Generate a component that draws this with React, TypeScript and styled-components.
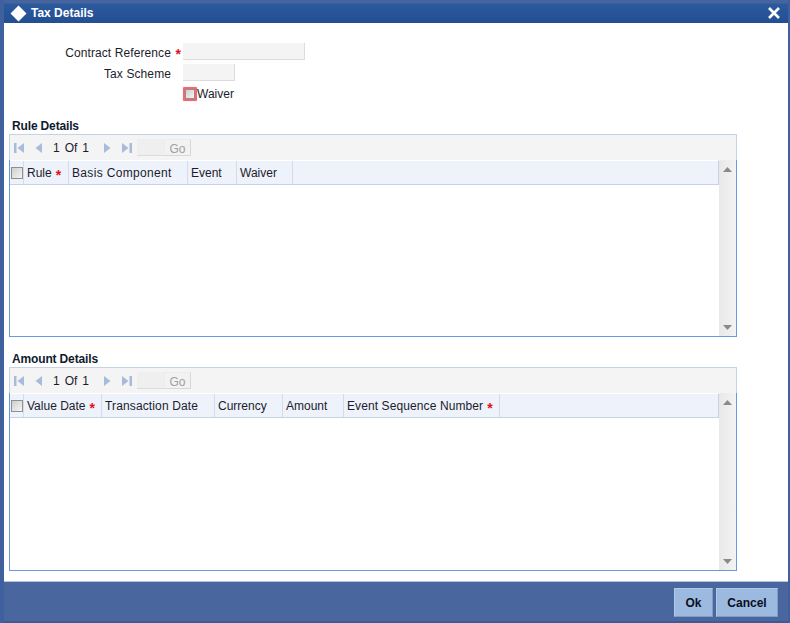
import React from 'react';
import styled, { createGlobalStyle } from 'styled-components';

const GlobalStyle = createGlobalStyle`
  html, body {
    margin: 0;
    padding: 0;
    background: #ffffff;
  }
  body {
    font-family: 'Liberation Sans', Arial, sans-serif;
    font-size: 12px;
    color: #1c1c2c;
  }
`;

const Window = styled.div`
  width: 790px;
  height: 623px;
  display: flex;
  flex-direction: column;
  overflow: hidden;
  background: #fff;
  border-left: 4px solid #3f5f9d;
  border-right: 2px solid #3f5f9d;
  box-sizing: border-box;
`;

const TitleBar = styled.div`
  height: 23px;
  flex: none;
  margin: 0 -2px 0 -4px;
  padding: 3px 10px 0 10px;
  box-sizing: border-box;
  display: flex;
  align-items: center;
  gap: 4px;
  background: linear-gradient(#46659f 0, #46659f 3px, #2c5a9f 4px, #234e92 100%);
  color: #fff;
  font-weight: bold;
  font-size: 12px;
`;

const TitleText = styled.span`
  flex: 1;
`;

const Main = styled.div`
  flex: 1;
  min-height: 0;
  padding: 20px 0 0 5px;
  display: flex;
  flex-direction: column;
`;

const Form = styled.div`
  display: grid;
  grid-template-columns: 174px 1fr;
  grid-auto-rows: min-content;
  row-gap: 4px;
  align-items: start;
`;

const FieldLabel = styled.label`
  justify-self: end;
  padding: 2px 12px 0 0;
  position: relative;
  line-height: 17px;
  height: 17px;
  box-sizing: border-box;
  letter-spacing: 0.1px;
`;

const Required = styled.span`
  color: #e0101c;
  font-weight: bold;
  font-size: 14px;
  line-height: 0;
`;

const LabelStar = styled(Required)`
  position: absolute;
  right: 2px;
  top: 11px;
`;

const TextInput = styled.div<{ $width: number }>`
  width: ${p => p.$width}px;
  height: 17px;
  box-sizing: border-box;
  background: #f4f4f4;
  border-right: 1px solid #dcdcdc;
  border-bottom: 1px solid #dcdcdc;
`;

const WaiverRow = styled.div`
  grid-column: 2;
  display: flex;
  align-items: center;
  height: 18px;
`;

const Check = styled.span<{ $size: number }>`
  display: block;
  flex: none;
  width: ${p => p.$size}px;
  height: ${p => p.$size}px;
  box-sizing: border-box;
  border: 1px solid #8f8f8f;
  background: linear-gradient(135deg, #cfcfcf, #f5f5f5);
`;

const FocusRing = styled.span`
  display: block;
  border: 2px solid #f4666e;
  border-radius: 1px;
  box-shadow: 0 0 1px #f9a0a5;
`;

const SectionTitle = styled.div<{ $top: number }>`
  margin-top: ${p => p.$top}px;
  padding-left: 3px;
  height: 15px;
  line-height: 15px;
  font-weight: bold;
  letter-spacing: -0.15px;
  color: #0f1a30;
`;

const Grid = styled.div<{ $height: number }>`
  width: 728px;
  height: ${p => p.$height}px;
  box-sizing: border-box;
  display: flex;
  flex-direction: column;
`;

const Toolbar = styled.div`
  height: 26px;
  flex: none;
  box-sizing: border-box;
  background: #f4f4f4;
  border: 1px solid #c6d3e2;
  border-bottom: none;
  display: flex;
  align-items: center;
  padding: 0 0 0 3px;
`;

const NavIcon = styled.svg`
  display: block;
  width: 12px;
  height: 12px;
  fill: #a9bbdc;
  flex: none;
`;

const IconGap = styled.span`
  width: 8px;
  flex: none;
`;

const PageText = styled.span`
  margin: 0 12px 0 8px;
  display: flex;
  gap: 5px;
  font-size: 12px;
  color: #1c1c2c;
`;

const PageInput = styled.div`
  width: 27px;
  height: 16px;
  margin-left: 4px;
  background: #efefef;
  border-bottom: 1px solid #dcdcdc;
  flex: none;
`;

const GoButton = styled.div`
  width: 27px;
  height: 17px;
  line-height: 18px;
  text-align: center;
  color: #a0a0a0;
  background: #f2f2f2;
  border: 1px solid #d8d8d8;
  border-top-color: #ececec;
  border-left-color: #ececec;
  box-sizing: border-box;
  flex: none;
`;

const GridBody = styled.div`
  flex: 1;
  min-height: 0;
  display: flex;
  border: 1px solid #699ade;
  border-top: none;
`;

const TablePane = styled.div`
  flex: 1;
  min-width: 0;
`;

const HeaderRow = styled.div`
  height: 25px;
  box-sizing: border-box;
  background: #eef2fa;
  border-top: 1px solid #fff;
  border-bottom: 1px solid #c6d3e4;
  border-right: 1px solid #c6d3e4;
  display: flex;
`;

const CheckCell = styled.div`
  width: 14px;
  flex: none;
  box-sizing: border-box;
  display: flex;
  align-items: center;
  justify-content: center;
  border-right: 1px solid #d4dce9;
  padding-top: 1px;
`;

const HeaderCell = styled.div<{ $width: number; $spacing?: number }>`
  width: ${p => p.$width}px;
  flex: none;
  box-sizing: border-box;
  padding-left: 3px;
  line-height: 25px;
  white-space: nowrap;
  letter-spacing: ${p => p.$spacing ?? 0}px;
  border-right: 1px solid #d4dce9;
`;

const HeaderStar = styled(Required)`
  position: relative;
  top: 3px;
  margin-left: 4px;
`;

const Scrollbar = styled.div`
  width: 17px;
  flex: none;
  box-sizing: border-box;
  background: linear-gradient(90deg, #e8e8e8, #f3f3f3);
  display: flex;
  flex-direction: column;
  justify-content: space-between;
  align-items: center;
  padding: 7px 0 6px;
`;

const Arrow = styled.svg`
  display: block;
  width: 9px;
  height: 5px;
  fill: #8a8a8a;
`;

const Footer = styled.div`
  height: 42px;
  flex: none;
  margin: 0 -2px 0 -4px;
  box-sizing: border-box;
  background: #4a669f;
  border-top: 1px solid #b5c4d8;
  border-bottom: 2px solid #3f5a92;
  border-left: 4px solid #3f5f9d;
  border-right: 2px solid #3f5f9d;
  display: flex;
  justify-content: flex-end;
  align-items: flex-start;
  gap: 3px;
  padding: 6px 10px 0 0;
`;

const Button = styled.button<{ $width: number }>`
  width: ${p => p.$width}px;
  height: 29px;
  padding: 0;
  border: 1px solid #7f9bc8;
  border-top-color: #b4c8e6;
  border-left-color: #b4c8e6;
  background: #9cb9e0;
  color: #0b0f1e;
  font-family: inherit;
  font-size: 12px;
  font-weight: bold;
`;

const First = () => (
  <NavIcon viewBox="0 0 12 12"><rect x="1" y="1" width="2.5" height="10" /><path d="M11 1v10L4.5 6z" /></NavIcon>
);
const Prev = () => (
  <NavIcon viewBox="0 0 12 12"><path d="M9 1v10L2.5 6z" /></NavIcon>
);
const Next = () => (
  <NavIcon viewBox="0 0 12 12"><path d="M3 1v10L9.5 6z" /></NavIcon>
);
const Last = () => (
  <NavIcon viewBox="0 0 12 12"><path d="M1 1v10L7.5 6z" /><rect x="8.5" y="1" width="2.5" height="10" /></NavIcon>
);

type Column = { title: string; width: number; required?: boolean; spacing?: number };

const ruleColumns: Column[] = [
  { title: 'Rule', width: 45, required: true },
  { title: 'Basis Component', width: 119, spacing: 0.33 },
  { title: 'Event', width: 49 },
  { title: 'Waiver', width: 56 },
];

const amountColumns: Column[] = [
  { title: 'Value Date', width: 78, required: true },
  { title: 'Transaction Date', width: 113, spacing: 0.13 },
  { title: 'Currency', width: 68 },
  { title: 'Amount', width: 61 },
  { title: 'Event Sequence Number', width: 156, required: true, spacing: 0.1 },
];

const DetailsGrid = ({ title, columns, height, top }: { title: string; columns: Column[]; height: number; top: number }) => (
  <>
    <SectionTitle $top={top}>{title}</SectionTitle>
    <Grid $height={height}>
      <Toolbar>
        <First />
        <IconGap />
        <Prev />
        <PageText><span>1</span><span>Of</span><span>1</span></PageText>
        <Next />
        <IconGap />
        <Last />
        <PageInput />
        <GoButton>Go</GoButton>
      </Toolbar>
      <GridBody>
        <TablePane>
          <HeaderRow>
            <CheckCell><Check $size={12} /></CheckCell>
            {columns.map(col => (
              <HeaderCell key={col.title} $width={col.width} $spacing={col.spacing}>
                {col.title}
                {col.required && <HeaderStar>*</HeaderStar>}
              </HeaderCell>
            ))}
          </HeaderRow>
        </TablePane>
        <Scrollbar>
          <Arrow viewBox="0 0 9 5"><path d="M4.5 0L9 5H0z" /></Arrow>
          <Arrow viewBox="0 0 9 5"><path d="M0 0h9L4.5 5z" /></Arrow>
        </Scrollbar>
      </GridBody>
    </Grid>
  </>
);

const App = () => (
  <>
    <GlobalStyle />
    <Window>
      <TitleBar>
        <svg width="17" height="17" viewBox="0 0 17 17">
          <path d="M8.5 0.5L16.5 8.5L8.5 16.5L0.5 8.5z" fill="#fff" />
        </svg>
        <TitleText>Tax Details</TitleText>
        <svg width="12" height="12" viewBox="0 0 12 12">
          <path d="M1 1L11 11M11 1L1 11" stroke="#fff" strokeWidth="2.6" />
        </svg>
      </TitleBar>
      <Main>
        <Form>
          <FieldLabel>Contract Reference<LabelStar>*</LabelStar></FieldLabel>
          <TextInput $width={122} />
          <FieldLabel>Tax Scheme</FieldLabel>
          <TextInput $width={52} />
          <WaiverRow>
            <FocusRing><Check $size={10} /></FocusRing>
            <span>Waiver</span>
          </WaiverRow>
        </Form>
        <DetailsGrid title="Rule Details" columns={ruleColumns} height={203} top={16} />
        <DetailsGrid title="Amount Details" columns={amountColumns} height={204} top={15} />
      </Main>
      <Footer>
        <Button $width={39}>Ok</Button>
        <Button $width={62}>Cancel</Button>
      </Footer>
    </Window>
  </>
);

export default App;
